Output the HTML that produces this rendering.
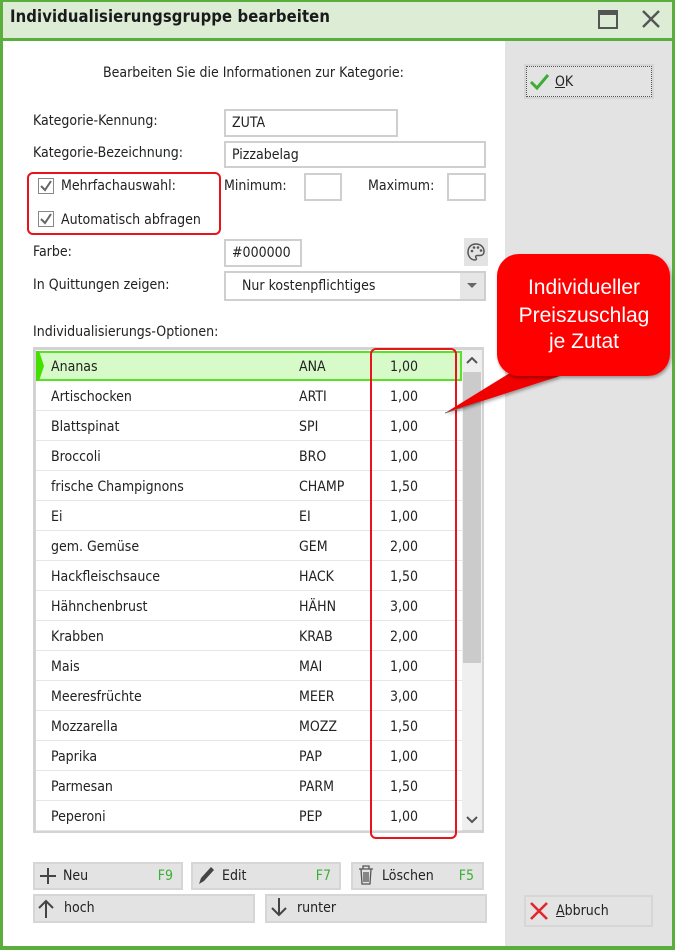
<!DOCTYPE html>
<html><head><meta charset="utf-8"><style>
*{margin:0;padding:0;box-sizing:border-box}
body{width:675px;height:950px;position:relative;overflow:hidden;background:#fff;font-family:"DejaVu Sans Condensed","Liberation Sans",sans-serif;font-size:14px;color:#222}
.a{position:absolute}
.inp{position:absolute;border:2px solid #cfcfcf;background:#fff;padding-left:6px;line-height:25px;font-size:14px}
.btn{position:absolute;background:#e3e3e3;border:2px solid #d6d6d6;font-size:14px;line-height:25px}
.row{position:absolute;left:36px;width:426px;height:30px;border-bottom:1px solid #e6e6e6;line-height:32px}
.row span{position:absolute}
.cb{position:absolute;width:16px;height:16px;border:1.5px solid #888;background:#fff}
</style></head><body>
<div class="a" style="left:0;top:0;width:675px;height:950px;border:3px solid #5aae3c;border-top-width:2px"></div>
<div class="a" style="left:3px;top:2px;width:669px;height:36px;background:#dcecd5"></div>
<div class="a" style="left:0;top:38px;width:675px;height:3px;background:#5aae3c"></div>
<div class="a" style="left:10px;top:7px;font-size:16.5px;font-weight:bold;color:#1a1a1a;letter-spacing:0.1px">Individualisierungsgruppe bearbeiten</div>
<svg class="a" style="left:597px;top:9px" width="24" height="22"><rect x="2" y="2" width="18" height="17" fill="none" stroke="#555" stroke-width="2"/><rect x="2" y="2" width="18" height="4" fill="#555"/></svg>
<svg class="a" style="left:640px;top:8px" width="24" height="24"><path d="M3 3L19 19M19 3L3 19" stroke="#555" stroke-width="2.4"/></svg>
<div class="a" style="left:505px;top:41px;width:167px;height:905px;background:#e3e3e3"></div>
<div class="a" style="left:3px;top:946px;width:672px;height:4px;background:#5aae3c"></div>

<div class="a" style="left:103px;top:65px">Bearbeiten Sie die Informationen zur Kategorie:</div>
<div class="btn" style="left:526px;top:66px;width:126px;height:31px;border:1px dotted #555;outline:2px solid #d6d6d6;padding-left:28px;line-height:30px"><u>O</u>K</div>
<svg class="a" style="left:529px;top:72px" width="22" height="20"><path d="M2 10L8 16L19 3" fill="none" stroke="#3cad36" stroke-width="3"/></svg>

<div class="a" style="left:33px;top:113px">Kategorie-Kennung:</div>
<div class="inp" style="left:224px;top:109px;width:174px;height:28px">ZUTA</div>
<div class="a" style="left:33px;top:145px">Kategorie-Bezeichnung:</div>
<div class="inp" style="left:224px;top:141px;width:262px;height:27px">Pizzabelag</div>

<div class="a" style="left:27px;top:172px;width:194px;height:63px;border:2px solid #e8131b;border-radius:6px"></div>
<div class="cb" style="left:38px;top:178px"></div><svg class="a" style="left:38px;top:178px" width="16" height="16"><path d="M3 8L7 12L13 3" fill="none" stroke="#666" stroke-width="2"/></svg>
<div class="a" style="left:61px;top:178px">Mehrfachauswahl:</div>
<div class="cb" style="left:38px;top:211px"></div><svg class="a" style="left:38px;top:211px" width="16" height="16"><path d="M3 8L7 12L13 3" fill="none" stroke="#666" stroke-width="2"/></svg>
<div class="a" style="left:61px;top:212px">Automatisch abfragen</div>
<div class="a" style="left:224px;top:178px">Minimum:</div>
<div class="inp" style="left:304px;top:173px;width:38px;height:28px"></div>
<div class="a" style="left:368px;top:178px">Maximum:</div>
<div class="inp" style="left:447px;top:173px;width:39px;height:28px"></div>

<div class="a" style="left:33px;top:244px">Farbe:</div>
<div class="inp" style="left:224px;top:239px;width:78px;height:28px">#000000</div>
<div class="a" style="left:464px;top:238px;width:24px;height:28px;background:#e3e3e3"></div>
<svg class="a" style="left:466px;top:242px" width="20" height="20"><path d="M10 2C5 2 2 5.5 2 10s3 8 7 8c1.5 0 1.8-1.2 1-2.2-.8-1-.3-2.3 1.2-2.3H14c2.5 0 4-1.7 4-4C18 5 14.5 2 10 2z" fill="none" stroke="#555" stroke-width="1.5"/><circle cx="6" cy="9" r="1.3" fill="#555"/><circle cx="8" cy="5.5" r="1.3" fill="#555"/><circle cx="12" cy="5.5" r="1.3" fill="#555"/><circle cx="15" cy="8.5" r="1.3" fill="#555"/></svg>

<div class="a" style="left:33px;top:277px">In Quittungen zeigen:</div>
<div class="inp" style="left:224px;top:271px;width:262px;height:30px;padding-left:16px;line-height:27px">Nur kostenpflichtiges</div>
<div class="a" style="left:460px;top:273px;width:24px;height:26px;background:#e6e6e6"></div>
<svg class="a" style="left:466px;top:282px" width="12" height="8"><path d="M1 1H11L6 6z" fill="#666"/></svg>

<div class="a" style="left:33px;top:324px">Individualisierungs-Optionen:</div>
<div class="a" style="left:33px;top:347px;width:451px;height:486px;border:3px solid #d3d3d3;background:#fff"></div>
<div class="a" style="left:462px;top:350px;width:20px;height:480px;background:#efefef"></div>
<div class="a" style="left:463px;top:372px;width:18px;height:291px;background:#cbcbcb"></div>
<svg class="a" style="left:466px;top:357px" width="12" height="8"><path d="M1 6L6 1L11 6" fill="none" stroke="#555" stroke-width="2"/></svg>
<svg class="a" style="left:466px;top:816px" width="12" height="8"><path d="M1 1L6 6L11 1" fill="none" stroke="#555" stroke-width="2"/></svg>

<div id="rows"></div>

<div class="a" style="left:370px;top:348px;width:87px;height:491px;border:2px solid #e8131b;border-radius:6px"></div>

<div class="btn" style="left:33px;top:862px;width:150px;height:28px;padding-left:28px">Neu<span style="position:absolute;right:8px;color:#3cb034">F9</span></div>
<svg class="a" style="left:38px;top:866px" width="20" height="20"><path d="M10 2V18M2 10H18" stroke="#444" stroke-width="2"/></svg>
<div class="btn" style="left:191px;top:862px;width:150px;height:28px;padding-left:29px">Edit<span style="position:absolute;right:8px;color:#3cb034">F7</span></div>
<svg class="a" style="left:196px;top:864px" width="20" height="22"><path d="M3 20L5 14L15 3L18 6L8 17z" fill="#444"/></svg>
<div class="btn" style="left:351px;top:862px;width:133px;height:28px;padding-left:29px">Löschen<span style="position:absolute;right:8px;color:#3cb034">F5</span></div>
<svg class="a" style="left:357px;top:864px" width="18" height="22"><path d="M2 5H16M6 5V2H12V5M4 5L5 20H13L14 5M7 8V18M9 8V18M11 8V18" fill="none" stroke="#555" stroke-width="1.3"/></svg>
<div class="btn" style="left:33px;top:894px;width:222px;height:29px;padding-left:29px">hoch</div>
<svg class="a" style="left:37px;top:898px" width="18" height="22"><path d="M9 20V3M2 10L9 3L16 10" fill="none" stroke="#444" stroke-width="2"/></svg>
<div class="btn" style="left:265px;top:894px;width:222px;height:29px;padding-left:30px">runter</div>
<svg class="a" style="left:270px;top:896px" width="18" height="22"><path d="M9 2V19M2 12L9 19L16 12" fill="none" stroke="#444" stroke-width="2"/></svg>
<div class="btn" style="left:524px;top:895px;width:129px;height:32px;padding-left:30px;line-height:29px"><u>A</u>bbruch</div>
<svg class="a" style="left:529px;top:901px" width="20" height="20"><path d="M2 2L18 18M18 2L2 18" stroke="#e3262b" stroke-width="2.6"/></svg>

<svg class="a" style="left:440px;top:250px" width="235" height="170"><defs><filter id="s"><feDropShadow dx="1" dy="2" stdDeviation="1.5" flood-opacity="0.35"/></filter></defs>
<path d="M78 118L120 126L5 163z" fill="#f10000" filter="url(#s)"/>
<rect x="57" y="4" width="173" height="122" rx="22" fill="#ff0000" filter="url(#s)"/>
<text x="144" y="44" text-anchor="middle" fill="#fff" font-family="Liberation Sans,sans-serif" font-size="21">Individueller</text>
<text x="144" y="72" text-anchor="middle" fill="#fff" font-family="Liberation Sans,sans-serif" font-size="21">Preiszuschlag</text>
<text x="144" y="98" text-anchor="middle" fill="#fff" font-family="Liberation Sans,sans-serif" font-size="21">je Zutat</text>
<path d="M5 163L40 152" stroke="#777" stroke-width="1"/></svg>

<script>
var d=[["Ananas","ANA","1,00"],["Artischocken","ARTI","1,00"],["Blattspinat","SPI","1,00"],["Broccoli","BRO","1,00"],["frische Champignons","CHAMP","1,50"],["Ei","EI","1,00"],["gem. Gemüse","GEM","2,00"],["Hackfleischsauce","HACK","1,50"],["Hähnchenbrust","HÄHN","3,00"],["Krabben","KRAB","2,00"],["Mais","MAI","1,00"],["Meeresfrüchte","MEER","3,00"],["Mozzarella","MOZZ","1,50"],["Paprika","PAP","1,00"],["Parmesan","PARM","1,50"],["Peperoni","PEP","1,00"]];
var h="";d.forEach(function(r,i){
var st=i==0?'background:#d6fbc9;border:2px solid #5ae02a;line-height:28px;':'';
var o=i==0?-2:0;
h+='<div class="row" style="top:'+(351+i*30)+'px;'+st+'">'+(i==0?'<svg style="position:absolute;left:-2px;top:-2px" width="10" height="30"><path d="M0 0H3L8 15L3 30H0z" fill="#44e000"/></svg>':'')+'<span style="left:'+(15+o)+'px">'+r[0]+'</span><span style="left:'+(263+o)+'px">'+r[1]+'</span><span style="left:'+(354+o)+'px">'+r[2]+'</span></div>';});
document.getElementById("rows").innerHTML=h;
</script>
</body></html>
